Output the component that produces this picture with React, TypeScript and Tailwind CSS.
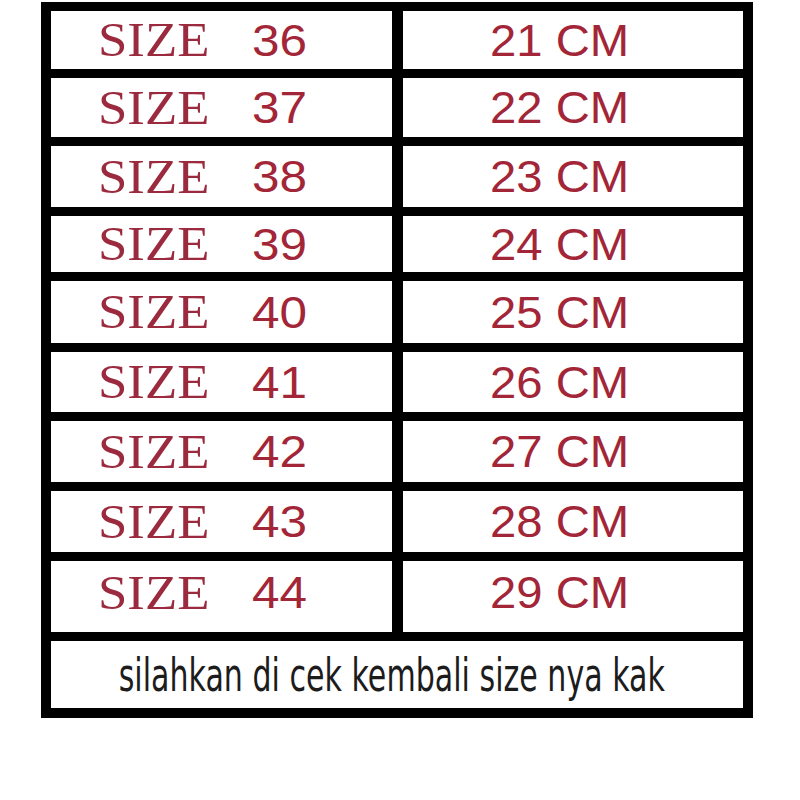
import React from "react";

const rows = [
  { size: "36", cm: "21 CM", h: "h-[67px]", p: "" },
  { size: "37", cm: "22 CM", h: "h-[68px]", p: "" },
  { size: "38", cm: "23 CM", h: "h-[70px]", p: "" },
  { size: "39", cm: "24 CM", h: "h-[65px]", p: "" },
  { size: "40", cm: "25 CM", h: "h-[71px]", p: "" },
  { size: "41", cm: "26 CM", h: "h-[69px]", p: "" },
  { size: "42", cm: "27 CM", h: "h-[70px]", p: "" },
  { size: "43", cm: "28 CM", h: "h-[70px]", p: "" },
  { size: "44", cm: "29 CM", h: "h-[80px]", p: "pb-[8px]" },
];

export default function App() {
  return (
    <div className="w-[800px] h-[800px] bg-white pt-[2px] pl-[41px]">
      <div className="w-[712px] border-[10px] border-t-[9px] border-black flex flex-col bg-white">
        {rows.map((r) => (
          <div key={r.size} className={`flex border-b-[9px] border-black ${r.h}`}>
            <div className={`w-[341px] flex items-center pl-[47px] ${r.p}`}>
              <span className="w-[154px] inline-block origin-left scale-x-[1.1] text-[48px] leading-none text-[#9c2a3e] font-['Liberation_Serif',serif]">
                SIZE
              </span>
              <span className="inline-block origin-left scale-x-[1.1] text-[45px] leading-none text-[#a32638] font-['Liberation_Sans',Arial,sans-serif]">
                {r.size}
              </span>
            </div>
            <div className={`flex-1 border-l-[11px] border-black flex items-center pl-[87px] ${r.p}`}>
              <span className="inline-block origin-left scale-x-[1.05] text-[45px] leading-none text-[#a32638] font-['Liberation_Sans',Arial,sans-serif]">
                {r.cm}
              </span>
            </div>
          </div>
        ))}
        <div className="h-[67px] flex items-center justify-center">
          <span className="inline-block scale-x-[0.64] whitespace-nowrap text-[47px] leading-none text-[#1c1c1c] font-['DejaVu_Sans',sans-serif] -ml-[10px]">
            silahkan di cek kembali size nya kak
          </span>
        </div>
      </div>
    </div>
  );
}
